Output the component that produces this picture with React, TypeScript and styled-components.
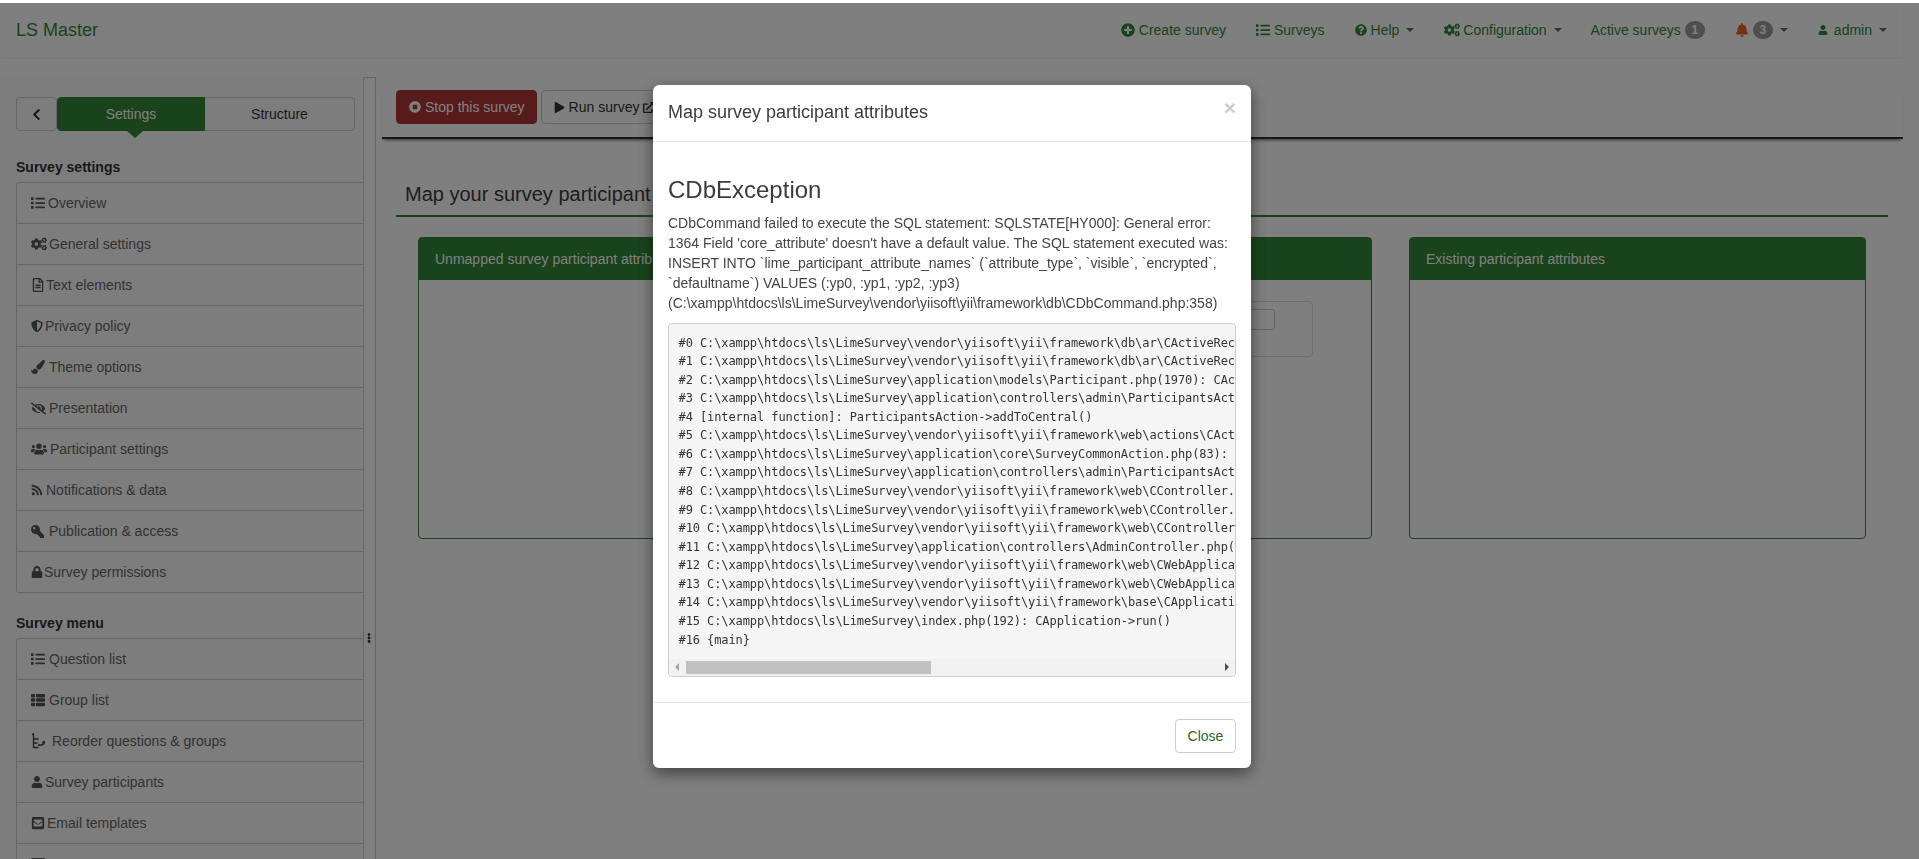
import React from 'react';
import styled, { createGlobalStyle } from 'styled-components';
import {
  FaBell,
  FaChevronLeft,
  FaCogs,
  FaEllipsisV,
  FaEnvelopeSquare,
  FaExternalLinkAlt,
  FaEyeSlash,
  FaKey,
  FaList,
  FaLock,
  FaPaintBrush,
  FaPlay,
  FaPlusCircle,
  FaQuestionCircle,
  FaRegFileAlt,
  FaRegListAlt,
  FaRss,
  FaShieldAlt,
  FaStopCircle,
  FaThList,
  FaUser,
  FaUsers,
} from 'react-icons/fa';

const GREEN = '#328637';

const GlobalStyle = createGlobalStyle`
  html, body {
    margin: 0;
    height: 100%;
    overflow: hidden;
    background: #fff;
    color: #333;
    font-family: "Liberation Sans", Arial, sans-serif;
    font-size: 14px;
    line-height: 20px;
  }
  * {
    box-sizing: border-box;
  }
`;

const Page = styled.div`
  height: 100vh;
  overflow: hidden;
  padding-top: 3px;
`;

const Navbar = styled.nav`
  display: flex;
  align-items: center;
  justify-content: space-between;
  width: 1903px;
  height: 54px;
  padding: 0 1px 0 16px;
  background: #fff;
  box-shadow: 0 1px 2px rgba(0, 0, 0, 0.06);
`;

const Brand = styled.a`
  color: ${GREEN};
  font-size: 18px;
`;

const NavList = styled.ul`
  display: flex;
  margin: 0;
  padding: 0;
  list-style: none;
`;

const NavItem = styled.li<{ $iconGap?: number; $paddingRight?: number }>`
  display: flex;
  align-items: center;
  padding: 0 ${(p) => p.$paddingRight ?? 15}px 0 15px;
  color: ${GREEN};

  > svg {
    margin-right: ${(p) => p.$iconGap ?? 4}px;
  }
`;

const Caret = styled.span`
  width: 0;
  height: 0;
  margin-left: 7px;
  border-top: 4px solid #333;
  border-right: 4px solid transparent;
  border-left: 4px solid transparent;
  opacity: 0.75;
`;

const Badge = styled.span`
  min-width: 20px;
  height: 18px;
  margin-left: 4px;
  border-radius: 10px;
  background: #9c9c9c;
  color: #fff;
  font-size: 12px;
  font-weight: 700;
  line-height: 18px;
  text-align: center;
`;

const BellIcon = styled(FaBell)`
  color: #e8641e;
`;

const Workspace = styled.div`
  display: flex;
  margin-top: 20px;
`;

const Sidebar = styled.aside`
  flex: none;
  width: 363px;
  padding: 20px 0 0 16px;
  background: #fbfbfb;
`;

const Tabs = styled.div`
  display: flex;
  width: 339px;
  height: 34px;
`;

const BackButton = styled.button`
  display: flex;
  align-items: center;
  justify-content: center;
  width: 41px;
  padding: 0;
  border: 1px solid #ccc;
  border-radius: 4px;
  background: transparent;
  color: #12304a;
  font-size: 13px;
`;

const Tab = styled.div<{ $active?: boolean }>`
  position: relative;
  flex: ${(p) => (p.$active ? '0 0 148px' : 1)};
  border: 1px solid ${(p) => (p.$active ? GREEN : '#ccc')};
  border-left-width: ${(p) => (p.$active ? 1 : 0)}px;
  border-radius: ${(p) => (p.$active ? '4px 0 0 4px' : '0 4px 4px 0')};
  background: ${(p) => (p.$active ? GREEN : 'transparent')};
  color: ${(p) => (p.$active ? '#fff' : '#333')};
  line-height: 32px;
  text-align: center;

  ${(p) =>
    p.$active &&
    `&::after {
      content: '';
      position: absolute;
      top: 33px;
      left: 69px;
      border-top: 7px solid ${GREEN};
      border-right: 8px solid transparent;
      border-left: 8px solid transparent;
    }`}
`;

const SectionTitle = styled.h4<{ $top: number }>`
  margin: ${(p) => p.$top}px 0 5px;
  color: #333;
  font-size: 14px;
  font-weight: 700;
  line-height: 20px;
`;

const Menu = styled.ul`
  margin: 0;
  padding: 0;
  border: solid #ccc;
  border-width: 1px 0 0 1px;
  border-top-left-radius: 4px;
  border-bottom-left-radius: 4px;
  list-style: none;
`;

const MenuRow = styled.li`
  display: flex;
  align-items: center;
  height: 41px;
  padding-left: 14px;
  border-bottom: 1px solid #ccc;
  color: #666;
`;

const MenuIcon = styled.span<{ $advance: number; $size?: number }>`
  display: flex;
  flex: none;
  width: ${(p) => p.$advance}px;
  color: #555;
  font-size: ${(p) => p.$size ?? 14}px;
`;

const MirroredKey = styled(FaKey)`
  transform: scaleX(-1);
`;

const Splitter = styled.div`
  position: relative;
  flex: none;
  width: 13px;
  height: 800px;
  border: 1px solid #ccc;
  border-bottom: 0;
`;

const Grip = styled.span`
  position: absolute;
  top: 552px;
  left: 0;
  color: #0c3a44;
  font-size: 10px;
`;

const Main = styled.main`
  flex: 1;
  padding-right: 16px;
`;

const Toolbar = styled.div`
  display: flex;
  gap: 4px;
  margin: 13px 0 0 6px;
  padding: 0 0 13px 14px;
  border-bottom: 2px solid #333;
  box-shadow: 0 3px 3px -2px rgba(0, 0, 0, 0.6);
`;

const ToolButton = styled.button<{ $danger?: boolean }>`
  display: flex;
  align-items: center;
  gap: 4px;
  height: 34px;
  padding: 0 ${(p) => (p.$danger ? 11 : 12)}px 0 12px;
  border: 1px solid ${(p) => (p.$danger ? '#b13636' : '#ccc')};
  border-radius: 4px;
  background: ${(p) => (p.$danger ? '#b13636' : '#fff')};
  color: ${(p) => (p.$danger ? '#fff' : '#333')};
  font: inherit;
  white-space: nowrap;
`;

const PageTitle = styled.h3`
  margin: 44px 15px 0 20px;
  padding: 0 0 10px 9px;
  border-bottom: 2px solid ${GREEN};
  color: #3c3c3c;
  font-size: 20px;
  font-weight: 400;
  line-height: 22px;
`;

const Panels = styled.div`
  display: grid;
  grid-template-columns: 458px 459px 457px;
  gap: 37px;
  margin: 20px 15px 0 20px;
  padding: 0 22px;
`;

const Panel = styled.section`
  height: 302px;
  border: 1px solid ${GREEN};
  border-radius: 4px;
`;

const PanelHeader = styled.header`
  height: 42px;
  padding: 11px 16px;
  background: ${GREEN};
  color: #fff;
`;

const DropBox = styled.div`
  height: 56px;
  margin: 21px 58px 0 20px;
  padding: 7px 37px 0 20px;
  border: 1px solid #ddd;
  border-radius: 4px;
`;

const DropInput = styled.div`
  height: 21px;
  border: 1px solid #ccc;
  border-radius: 3px;
`;

const ModalLayer = styled.div`
  position: fixed;
  inset: 3px 15px 0 0;
  display: flex;
  align-items: flex-start;
  justify-content: center;
  padding-top: 82px;
  box-shadow: 15px 0 0 rgba(0, 0, 0, 0.5);
  background: rgba(0, 0, 0, 0.5);
`;

const Modal = styled.div`
  width: 598px;
  border-radius: 6px;
  background: #fff;
  box-shadow: 0 5px 15px rgba(0, 0, 0, 0.5);
`;

const ModalHeader = styled.header`
  display: flex;
  align-items: flex-start;
  justify-content: space-between;
  height: 57px;
  padding: 14px 15px;
  border-bottom: 1px solid #e5e5e5;
`;

const ModalTitle = styled.h4`
  margin: 0;
  color: #3c3c3c;
  font-size: 18px;
  font-weight: 400;
  line-height: 26px;
`;

const CloseCross = styled.span`
  margin-top: -2px;
  color: #ccc;
  font-size: 21px;
  font-weight: 700;
  line-height: 21px;
`;

const ModalBody = styled.div`
  padding: 15px;
`;

const ErrorTitle = styled.h1`
  margin: 20px 0 10px;
  color: #3c3c3c;
  font-size: 24px;
  font-weight: 400;
  line-height: 26px;
`;

const ErrorText = styled.p`
  margin: 0 0 10px;
  color: #444;
`;

const CodeBox = styled.div`
  margin-bottom: 10px;
  overflow: hidden;
  border: 1px solid #ccc;
  border-radius: 4px;
  background: #f5f5f5;
`;

const Trace = styled.pre`
  margin: 0;
  padding: 9.5px;
  overflow: hidden;
  color: #333;
  font-family: "DejaVu Sans Mono", "Liberation Mono", monospace;
  font-size: 12px;
  letter-spacing: -0.09px;
  line-height: 18.57px;
`;

const ScrollTrack = styled.div`
  display: flex;
  align-items: center;
  justify-content: space-between;
  height: 17px;
  background: #f1f1f1;
`;

const ScrollThumb = styled.div`
  width: 245px;
  height: 13px;
  margin-right: auto;
  background: #c1c1c1;
`;

const ScrollArrow = styled.span<{ $right?: boolean }>`
  flex: none;
  width: 0;
  height: 0;
  margin: ${(p) => (p.$right ? '0 6px 0 0' : '0 7px 0 6px')};
  border-top: 4px solid transparent;
  border-bottom: 4px solid transparent;
  ${(p) =>
    p.$right ? 'border-left: 4px solid #505050;' : 'border-right: 4px solid #a3a3a3;'}
`;

const ModalFooter = styled.footer`
  display: flex;
  justify-content: flex-end;
  padding: 16px 15px 15px;
  border-top: 1px solid #e5e5e5;
`;

const CloseButton = styled.button`
  width: 61px;
  height: 34px;
  border: 1px solid #ccc;
  border-radius: 4px;
  background: #fff;
  color: #2f5f35;
  font: inherit;
`;

const ReorderIcon = () => (
  <svg width='14' height='16' viewBox='0 0 14 16' fill='none' stroke='#444' strokeWidth='1.3'>
    <path d='M2.5 0v15M1 1.5h1.5M2.5 6h5M2.5 10h4M2.5 14.5h5' />
    <path d='M7 12h3.5c1.8 0 2.5-1.2 2.5-3M11.2 10.2 13 8.4l1 1.8' />
  </svg>
);

const settingsMenu = [
  { icon: <FaList />, label: 'Overview', advance: 17 },
  { icon: <FaCogs />, size: 16, label: 'General settings', advance: 18 },
  { icon: <FaRegFileAlt />, label: 'Text elements', advance: 15 },
  { icon: <FaShieldAlt />, size: 12, label: 'Privacy policy', advance: 14 },
  { icon: <FaPaintBrush />, label: 'Theme options', advance: 18 },
  { icon: <FaEyeSlash />, size: 15, label: 'Presentation', advance: 18 },
  { icon: <FaUsers />, size: 16, label: 'Participant settings', advance: 19 },
  { icon: <FaRss />, size: 12, label: 'Notifications & data', advance: 15 },
  { icon: <MirroredKey />, size: 13, label: 'Publication & access', advance: 18 },
  { icon: <FaLock />, size: 12, label: 'Survey permissions', advance: 13 },
];

const surveyMenu = [
  { icon: <FaList />, label: 'Question list', advance: 18 },
  { icon: <FaThList />, label: 'Group list', advance: 18 },
  { icon: <ReorderIcon />, label: 'Reorder questions & groups', advance: 21 },
  { icon: <FaUser />, size: 12, label: 'Survey participants', advance: 14 },
  { icon: <FaEnvelopeSquare />, label: 'Email templates', advance: 16 },
  { icon: <FaRegListAlt />, label: 'Quotas', advance: 16 },
];

const base = 'C:\\xampp\\htdocs\\ls\\LimeSurvey\\';
const yii = `${base}vendor\\yiisoft\\yii\\framework\\`;

const traceLines = [
  `#0 ${yii}db\\ar\\CActiveRecord.php(1121): CDbCommand->execute()`,
  `#1 ${yii}db\\ar\\CActiveRecord.php(818): CActiveRecord->insert(NULL)`,
  `#2 ${base}application\\models\\Participant.php(1970): CActiveRecord->save()`,
  `#3 ${base}application\\controllers\\admin\\ParticipantsAction.php(2088): Participant->storeAttribute()`,
  '#4 [internal function]: ParticipantsAction->addToCentral()',
  `#5 ${yii}web\\actions\\CAction.php(109): ReflectionMethod->invokeArgs()`,
  `#6 ${base}application\\core\\SurveyCommonAction.php(83): CAction->runWithParamsInternal()`,
  `#7 ${base}application\\controllers\\admin\\ParticipantsAction.php(1): SurveyCommonAction->runWithParams()`,
  `#8 ${yii}web\\CController.php(308): CAction->runWithParams(Array)`,
  `#9 ${yii}web\\CController.php(286): CController->runAction(Object(ParticipantsAction))`,
  `#10 ${yii}web\\CController.php(265): CController->runActionWithFilters()`,
  `#11 ${base}application\\controllers\\AdminController.php(169): CController->run('addToCentral')`,
  `#12 ${yii}web\\CWebApplication.php(282): AdminController->run('addToCentral')`,
  `#13 ${yii}web\\CWebApplication.php(141): CWebApplication->runController('admin/participa...')`,
  `#14 ${yii}base\\CApplication.php(185): CWebApplication->processRequest()`,
  `#15 ${base}index.php(192): CApplication->run()`,
  '#16 {main}',
];

const App = () => (
  <Page>
    <GlobalStyle />
    <Navbar>
      <Brand>LS Master</Brand>
      <NavList>
        <NavItem>
          <FaPlusCircle />
          Create survey
        </NavItem>
        <NavItem>
          <FaList />
          Surveys
        </NavItem>
        <NavItem>
          <FaQuestionCircle size={12} />
          Help
          <Caret />
        </NavItem>
        <NavItem $iconGap={3} $paddingRight={14}>
          <FaCogs size={16} />
          Configuration
          <Caret />
        </NavItem>
        <NavItem>
          Active surveys
          <Badge>1</Badge>
        </NavItem>
        <NavItem $iconGap={0}>
          <BellIcon />
          <Badge>3</Badge>
          <Caret />
        </NavItem>
        <NavItem $iconGap={6}>
          <FaUser size={10} />
          admin
          <Caret />
        </NavItem>
      </NavList>
    </Navbar>

    <Workspace>
      <Sidebar>
        <Tabs>
          <BackButton aria-label='back'>
            <FaChevronLeft />
          </BackButton>
          <Tab $active>Settings</Tab>
          <Tab>Structure</Tab>
        </Tabs>
        <SectionTitle $top={26}>Survey settings</SectionTitle>
        <Menu>
          {settingsMenu.map((item) => (
            <MenuRow key={item.label}>
              <MenuIcon $advance={item.advance} $size={item.size}>
                {item.icon}
              </MenuIcon>
              {item.label}
            </MenuRow>
          ))}
        </Menu>
        <SectionTitle $top={20}>Survey menu</SectionTitle>
        <Menu>
          {surveyMenu.map((item) => (
            <MenuRow key={item.label}>
              <MenuIcon $advance={item.advance} $size={item.size}>
                {item.icon}
              </MenuIcon>
              {item.label}
            </MenuRow>
          ))}
        </Menu>
      </Sidebar>

      <Splitter>
        <Grip>
          <FaEllipsisV />
        </Grip>
      </Splitter>

      <Main>
        <Toolbar>
          <ToolButton $danger>
            <FaStopCircle size={12} />
            Stop this survey
          </ToolButton>
          <ToolButton>
            <FaPlay size={11} />
            Run survey
            <FaExternalLinkAlt size={11} />
          </ToolButton>
        </Toolbar>
        <PageTitle>Map your survey participant attributes to an existing participant attribute</PageTitle>
        <Panels>
          <Panel>
            <PanelHeader>Unmapped survey participant attributes</PanelHeader>
          </Panel>
          <Panel>
            <PanelHeader>Participant attributes to create</PanelHeader>
            <DropBox>
              <DropInput />
            </DropBox>
          </Panel>
          <Panel>
            <PanelHeader>Existing participant attributes</PanelHeader>
          </Panel>
        </Panels>
      </Main>
    </Workspace>

    <ModalLayer>
      <Modal>
        <ModalHeader>
          <ModalTitle>Map survey participant attributes</ModalTitle>
          <CloseCross>×</CloseCross>
        </ModalHeader>
        <ModalBody>
          <ErrorTitle>CDbException</ErrorTitle>
          <ErrorText>
            CDbCommand failed to execute the SQL statement: SQLSTATE[HY000]: General error: 1364 Field
            'core_attribute' doesn't have a default value. The SQL statement executed was: INSERT INTO
            `lime_participant_attribute_names` (`attribute_type`, `visible`, `encrypted`, `defaultname`)
            VALUES (:yp0, :yp1, :yp2, :yp3)
            (C:\xampp\htdocs\ls\LimeSurvey\vendor\yiisoft\yii\framework\db\CDbCommand.php:358)
          </ErrorText>
          <CodeBox>
            <Trace>{traceLines.join('\n')}</Trace>
            <ScrollTrack>
              <ScrollArrow />
              <ScrollThumb />
              <ScrollArrow $right />
            </ScrollTrack>
          </CodeBox>
        </ModalBody>
        <ModalFooter>
          <CloseButton>Close</CloseButton>
        </ModalFooter>
      </Modal>
    </ModalLayer>
  </Page>
);

export default App;
